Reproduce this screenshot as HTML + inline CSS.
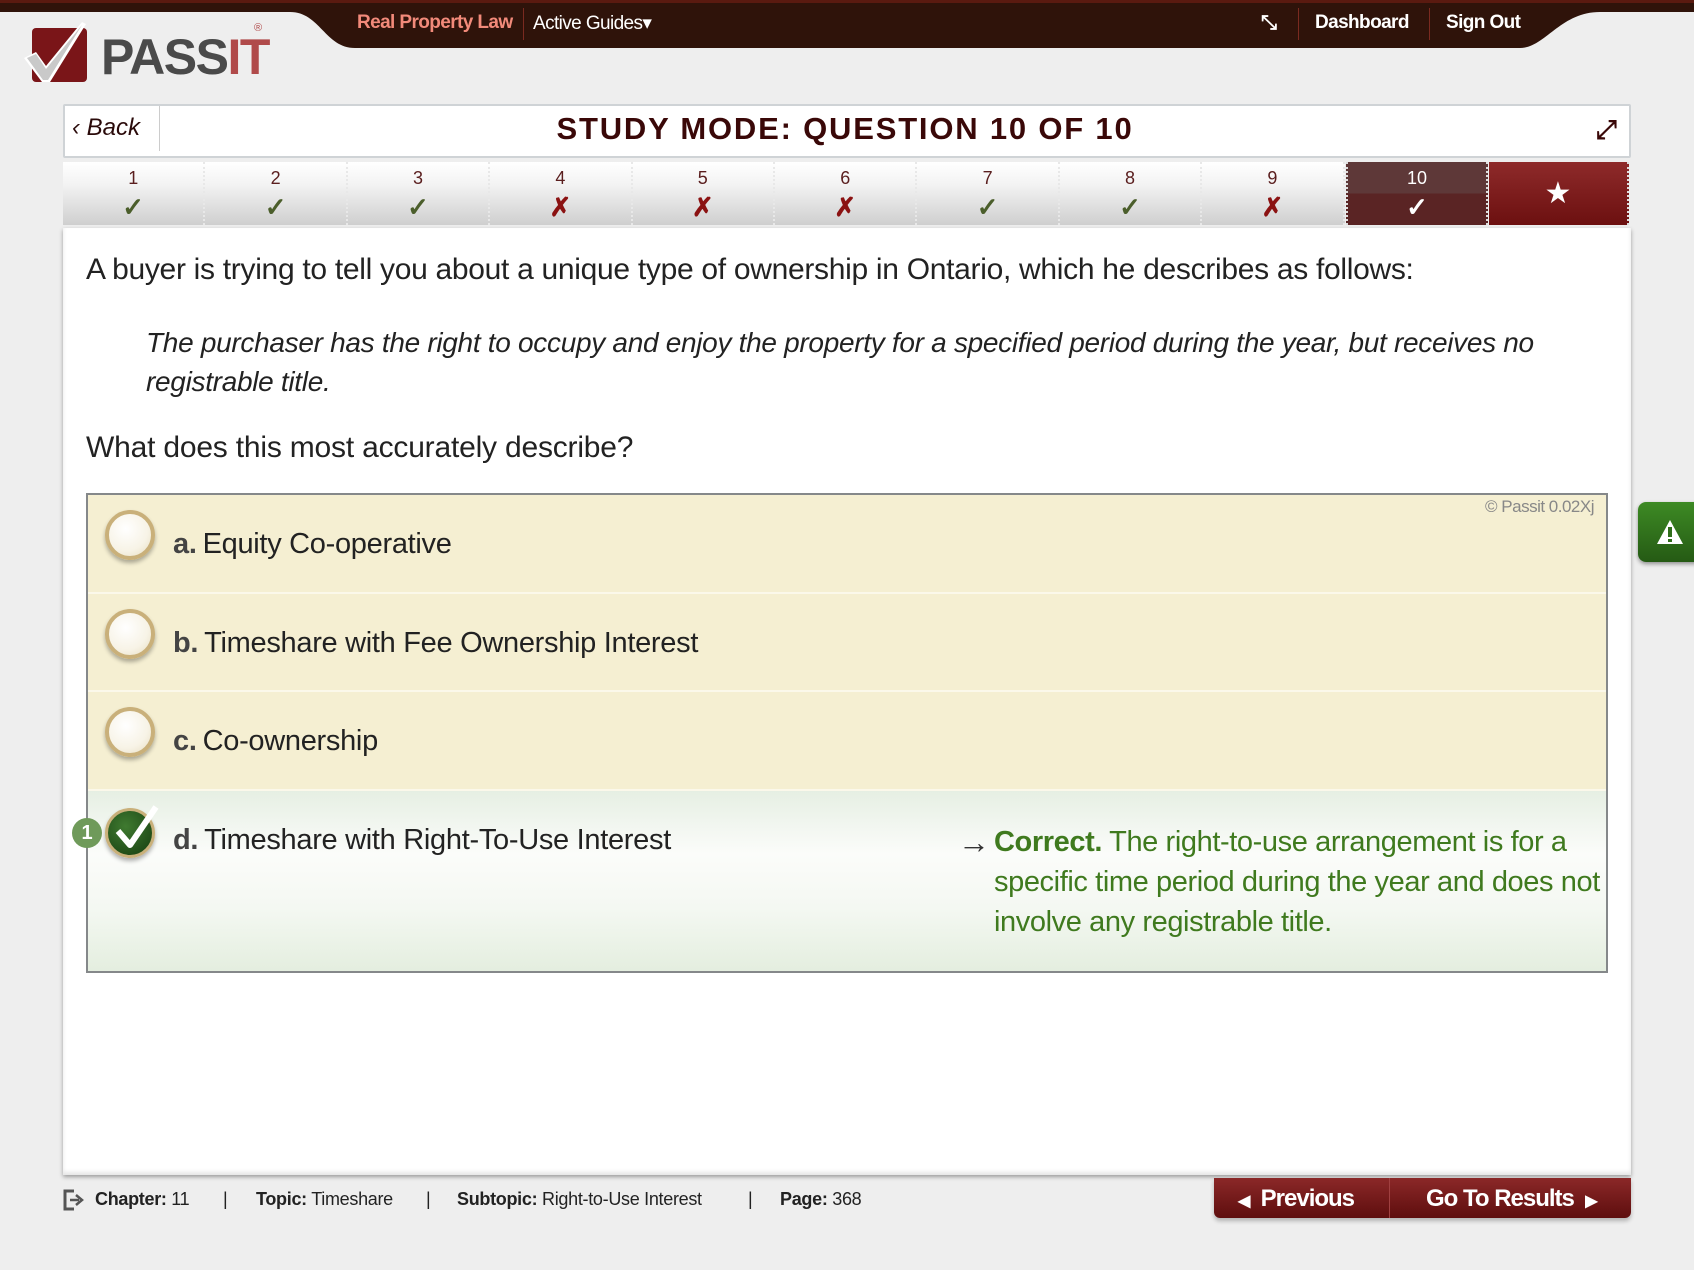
<!DOCTYPE html>
<html><head><meta charset="utf-8"><style>
*{box-sizing:border-box;margin:0;padding:0}
body{width:1694px;height:1270px;background:#eeeeee;font-family:"Liberation Sans",sans-serif;position:relative;overflow:hidden;color:#222}
.abs{position:absolute}
.nav{font-size:19px;color:#fff;top:12px;letter-spacing:-0.6px}
.tab{position:absolute;top:162px;width:142.4px;height:63px;background:linear-gradient(#fff 0%,#f3f3f3 35%,#cfcfcf 100%);border-right:2px dotted #e8e8e8;text-align:center}
.tab .n{font-size:18px;color:#5a1e1e;margin-top:3px;height:27px;line-height:27px}
.tab .m{font-size:26px;line-height:30px;font-weight:bold}
.ok{color:#4b5e2b}.x{color:#8b1212}
.row{position:absolute;left:88px;width:1518px;background:#f5efd2;border-bottom:2px solid #fbf8ea}
.rad{position:absolute;left:17px;width:50px;height:50px;border-radius:50%;border:4px solid #c9b07a;background:radial-gradient(circle at 40% 35%,#fff 0%,#f7f3e6 60%,#e6dcc0 100%);box-shadow:0 3px 4px rgba(0,0,0,.3)}
.opt{position:absolute;left:85px;font-size:29px;color:#222;letter-spacing:-0.3px}
.opt b{color:#444;margin-right:6px}
.ft{font-size:18px;color:#222;top:1189px;letter-spacing:-0.3px}
</style></head><body>
<svg class="abs" style="left:0;top:0" width="1694" height="50">
<path d="M0 0 H1694 V12 H1600 C1560 12 1545 48 1520 48 H355 C325 48 320 12 290 12 H0 Z" fill="#2f130a"/>
</svg>
<div class="abs" style="left:0;top:0;width:1694px;height:3px;background:#5a1a10"></div>
<div class="abs nav" style="left:357px;color:#f28a7a;font-weight:bold">Real Property Law</div>
<div class="abs" style="left:523px;top:8px;width:1px;height:32px;background:#7a2a20"></div>
<div class="abs nav" style="left:533px">Active Guides&#9662;</div>
<div class="abs nav" style="left:1261px;font-size:20px;font-weight:bold">&#10529;</div>
<div class="abs" style="left:1298px;top:8px;width:1px;height:32px;background:#7a2a20"></div>
<div class="abs nav" style="left:1315px;font-weight:bold">Dashboard</div>
<div class="abs" style="left:1429px;top:8px;width:1px;height:32px;background:#7a2a20"></div>
<div class="abs nav" style="left:1446px;font-weight:bold">Sign Out</div>
<svg class="abs" style="left:24px;top:22px" width="80" height="62">
<rect x="8" y="6" width="55" height="54" rx="4" fill="#7a1518"/>
<path d="M0 36 L12 30 L22 44 L58 0 L62 2 L26 60 L18 60 Z" fill="#fff"/>
<path d="M3 36 L12 32 L22 47 L58 3 L24 58 L19 58 Z" fill="#c9c9c9"/>
</svg>
<div class="abs" style="left:101px;top:28px;font-size:50px;font-weight:bold;color:#4a4a4a;letter-spacing:-1.5px">PASS<span style="color:#b04a4a">IT</span></div>
<div class="abs" style="left:254px;top:22px;font-size:11px;color:#b04a4a">®</div>
<div class="abs" style="left:63px;top:104px;width:1568px;height:54px;background:#fff;border:2px solid #cfd3d6;border-radius:2px"></div>
<div class="abs" style="left:159px;top:106px;width:1px;height:45px;background:#ccc"></div>
<div class="abs" style="left:72px;top:114px;font-size:24px;font-style:italic;color:#2a0a0a">&#8249; Back</div>
<div class="abs" style="left:160px;width:1370px;top:111px;text-align:center;font-size:31px;font-weight:bold;letter-spacing:1.8px;color:#3a0808">STUDY MODE: QUESTION 10 OF 10</div>
<div class="abs" style="left:1596px;top:114px;font-size:26px;color:#3a0808;font-weight:bold">&#10530;</div>
<div class="tab" style="left:63px"><div class="n">1</div><div class="m ok">&#10003;</div></div>
<div class="tab" style="left:205.4px"><div class="n">2</div><div class="m ok">&#10003;</div></div>
<div class="tab" style="left:347.8px"><div class="n">3</div><div class="m ok">&#10003;</div></div>
<div class="tab" style="left:490.2px"><div class="n">4</div><div class="m x">&#10007;</div></div>
<div class="tab" style="left:632.6px"><div class="n">5</div><div class="m x">&#10007;</div></div>
<div class="tab" style="left:775px"><div class="n">6</div><div class="m x">&#10007;</div></div>
<div class="tab" style="left:917.4px"><div class="n">7</div><div class="m ok">&#10003;</div></div>
<div class="tab" style="left:1059.8px"><div class="n">8</div><div class="m ok">&#10003;</div></div>
<div class="tab" style="left:1202.2px"><div class="n">9</div><div class="m x">&#10007;</div></div>
<div class="tab" style="left:1346px;width:142px;background:linear-gradient(#5e3838 0%,#5e3838 50%,#5a2424 50%,#5a2424 100%);border:2px dotted #ddd;border-top:none;border-bottom:none"><div class="n" style="color:#fff">10</div><div class="m" style="color:#fff">&#10003;</div></div>
<div class="tab" style="left:1489px;width:140px;background:linear-gradient(#8e2a2a,#6c1010);border:none;border-right:2px dotted #ddd"><div style="color:#fff;font-size:30px;line-height:63px">&#9733;</div></div>
<div class="abs" style="left:63px;top:228px;width:1568px;height:947px;background:#fff;box-shadow:0 2px 4px rgba(0,0,0,.35),inset 0 -3px 4px rgba(0,0,0,.1)"></div>
<div class="abs" style="left:86px;top:253px;font-size:30px;letter-spacing:-0.3px;color:#222">A buyer is trying to tell you about a unique type of ownership in Ontario, which he describes as follows:</div>
<div class="abs" style="left:146px;top:323px;width:1410px;font-size:28px;font-style:italic;line-height:39px;letter-spacing:-0.3px;color:#222">The purchaser has the right to occupy and enjoy the property for a specified period during the year, but receives no registrable title.</div>
<div class="abs" style="left:86px;top:431px;font-size:30px;letter-spacing:-0.2px;color:#222">What does this most accurately describe?</div>
<div class="abs" style="left:86px;top:493px;width:1522px;height:480px;border:2px solid #85888a;background:#fff"></div>
<div class="row" style="top:495px;height:99px"><div class="rad" style="top:15px"></div><div class="opt" style="top:33px"><b>a.</b>Equity Co-operative</div>
<div class="abs" style="right:12px;top:2px;font-size:17px;color:#888;letter-spacing:-0.5px">© Passit 0.02Xj</div></div>
<div class="row" style="top:594px;height:98px"><div class="rad" style="top:15px"></div><div class="opt" style="top:33px"><b>b.</b>Timeshare with Fee Ownership Interest</div></div>
<div class="row" style="top:692px;height:99px"><div class="rad" style="top:15px"></div><div class="opt" style="top:33px"><b>c.</b>Co-ownership</div></div>
<div class="row" style="top:791px;height:180px;background:linear-gradient(#e6efe3 0%,#fbfcfa 35%,#f4f8f2 65%,#e4eedf 100%);border:none">
<div class="abs" style="left:17px;top:17px;width:50px;height:50px;border-radius:50%;border:3px solid #c9b07a;background:radial-gradient(circle at 40% 35%,#3f7a30,#163d10);box-shadow:0 3px 4px rgba(0,0,0,.3)"></div>
<svg class="abs" style="left:22px;top:12px" width="50" height="50"><path d="M8 28 L20 42 L46 4" stroke="#fff" stroke-width="6" fill="none" stroke-linejoin="round"/></svg>
<div class="abs" style="left:-16px;top:27px;width:30px;height:30px;border-radius:50%;background:#6f9a5a;color:#fff;font-size:20px;font-weight:bold;text-align:center;line-height:30px">1</div>
<div class="opt" style="top:33px"><b>d.</b>Timeshare with Right-To-Use Interest</div>
<div class="abs" style="left:906px;top:31px;width:620px;font-size:29px;line-height:40px;color:#3f7a1e;letter-spacing:-0.4px"><span style="position:absolute;left:-36px;color:#333;font-size:32px">&#8594;</span><b>Correct.</b> The right-to-use arrangement is for a specific time period during the year and does not involve any registrable title.</div>
</div>
<div class="abs" style="left:1638px;top:502px;width:60px;height:60px;border-radius:8px 0 0 8px;background:linear-gradient(#3d8a24,#255a14);box-shadow:0 2px 4px rgba(0,0,0,.4)"></div>
<svg class="abs" style="left:1655px;top:518px" width="30" height="28"><path d="M15 2 L28 26 H2 Z" fill="#fff"/><rect x="13" y="9" width="4" height="10" fill="#2f6e1a"/><rect x="13" y="21" width="4" height="3" fill="#2f6e1a"/></svg>
<svg class="abs" style="left:62px;top:1188px" width="24" height="24"><path d="M12 3 H3 V21 H12" stroke="#555" stroke-width="3" fill="none"/><path d="M8 12 H17 M14 7 L20 12 L14 17" stroke="#555" stroke-width="2.5" fill="none"/></svg>
<div class="abs ft" style="left:95px"><b>Chapter:</b> 11</div>
<div class="abs ft" style="left:223px">|</div>
<div class="abs ft" style="left:256px"><b>Topic:</b> Timeshare</div>
<div class="abs ft" style="left:426px">|</div>
<div class="abs ft" style="left:457px"><b>Subtopic:</b> Right-to-Use Interest</div>
<div class="abs ft" style="left:748px">|</div>
<div class="abs ft" style="left:780px"><b>Page:</b> 368</div>
<div class="abs" style="left:1214px;top:1178px;width:417px;height:40px;background:linear-gradient(#8b2828,#5e0e0e);border-radius:0 0 6px 6px;box-shadow:0 3px 4px rgba(0,0,0,.25)"></div>
<div class="abs" style="left:1389px;top:1178px;width:1px;height:40px;background:#a04040"></div>
<div class="abs" style="left:1238px;top:1185px;font-size:24px;font-weight:bold;color:#fff;letter-spacing:-1px"><span style="font-size:16px">&#9664;</span>&nbsp;&nbsp;Previous</div>
<div class="abs" style="left:1426px;top:1185px;font-size:24px;font-weight:bold;color:#fff;letter-spacing:-1px">Go To Results&nbsp;&nbsp;<span style="font-size:16px">&#9654;</span></div>
</body></html>
